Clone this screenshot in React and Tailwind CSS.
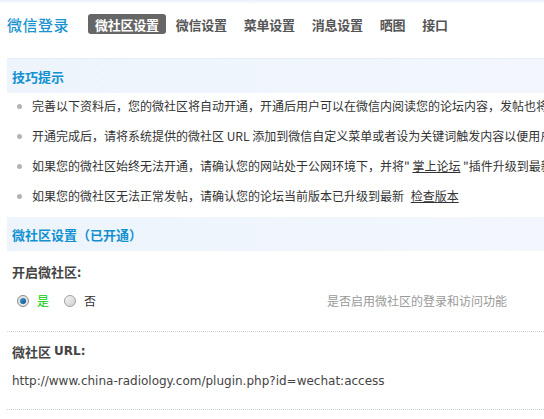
import React from "react"

const tabs = ["微社区设置", "微信设置", "菜单设置", "消息设置", "晒图", "接口"]

function SectionTitle({ children }) {
    return (
        <div className="h-[34px] flex items-center pl-[5px] bg-gradient-to-r from-[#edf4fc] to-[#f3f7fd] text-[13px] font-bold text-[#1191d0] leading-none">
            {children}
        </div>
    )
}

function Radio({ checked }) {
    if (checked) {
        return (
            <span className="block w-[12px] h-[12px] rounded-full border border-[#8e8e8e] bg-[#e4e4e4] flex items-center justify-center">
                <span className="block w-[6px] h-[6px] rounded-full bg-gradient-to-br from-[#3fa2dc] to-[#0a4f86]" />
            </span>
        )
    }
    return <span className="block w-[12px] h-[12px] rounded-full border border-[#a0a0a0] bg-gradient-to-br from-[#f6f6f6] to-[#cfcfcf]" />
}

function Tip({ children }) {
    return (
        <li className="h-[30px] flex items-center whitespace-nowrap">
            <span className="ml-[10px] w-[5px] h-[5px] rounded-full bg-[#b4b4b4] shrink-0" />
            <span className="ml-[10px] text-[12px] text-[#333] leading-none">{children}</span>
        </li>
    )
}

export default function App() {
    return (
        <div className="w-[544px] h-[419px] overflow-hidden bg-white font-['Noto_Sans_CJK_SC','Noto_Sans',sans-serif]">
            <div className="h-[4px] bg-gradient-to-b from-[#e9f0f9] to-white" />
            <div className="pl-[7px]">
                <div className="h-[55px] pt-[10px] border-b border-[#e4edf8]">
                    <div className="flex items-center h-[20px]">
                        <h1 className="text-[15px] leading-none text-[#1a93cf] font-medium tracking-[0.5px]">微信登录</h1>
                        <ul className="flex items-center ml-[19px]">
                            {tabs.map((t, i) => (
                                <li
                                    key={t}
                                    className={
                                        i === 0
                                            ? "h-[20px] px-[7px] flex items-center rounded-[3px] bg-[#666] text-white text-[13px] font-bold leading-none tracking-[-0.25px]"
                                            : "h-[20px] px-[7px] ml-[3px] flex items-center text-[#555] text-[13px] font-bold leading-none tracking-[-0.25px]"
                                    }
                                >
                                    {t}
                                </li>
                            ))}
                        </ul>
                    </div>
                </div>

                <SectionTitle>技巧提示</SectionTitle>
                <ul className="-mt-[2px] mb-[6px]">
                    <Tip>完善以下资料后，您的微社区将自动开通，开通后用户可以在微信内阅读您的论坛内容，发帖也将同步到论坛</Tip>
                    <Tip>开通完成后，请将系统提供的微社区 URL 添加到微信自定义菜单或者设为关键词触发内容以便用户访问</Tip>
                    <Tip>
                        如果您的微社区始终无法开通，请确认您的网站处于公网环境下，并将" <a className="underline">掌上论坛</a> "插件升级到最新版本
                    </Tip>
                    <Tip>
                        如果您的微社区无法正常发帖，请确认您的论坛当前版本已升级到最新 <a className="underline ml-[4px]">检查版本</a>
                    </Tip>
                </ul>

                <SectionTitle>微社区设置（已开通）</SectionTitle>

                <div className="pt-[5px] pb-[15px] border-b border-dotted border-[#c9d3dd]">
                    <div className="h-[30px] flex items-center pl-[5px] text-[13px] font-bold text-[#444] leading-none">开启微社区:</div>
                    <div className="h-[30px] flex items-center pl-[5px]">
                        <div className="w-[315px] flex items-center text-[12px] leading-none">
                            <span className="ml-[5px]"><Radio checked /></span>
                            <span className="ml-[8px] text-[#00cc00]">是</span>
                            <span className="ml-[15px]"><Radio /></span>
                            <span className="ml-[8px] text-[#333]">否</span>
                        </div>
                        <span className="text-[12px] text-[#999] leading-none">是否启用微社区的登录和访问功能</span>
                    </div>
                </div>

                <div className="pt-[4px] pb-[13px] border-b border-dotted border-[#c9d3dd]">
                    <div className="h-[30px] flex items-center pl-[5px] text-[13px] font-bold text-[#444] leading-none">
                        微社区 <span className="ml-[3px] font-['DejaVu_Sans',sans-serif] text-[12px]">URL:</span>
                    </div>
                    <div className="h-[30px] flex items-center pl-[5px] text-[12px] text-[#444] leading-none font-['DejaVu_Sans',sans-serif]">
                        http://www.china-radiology.com/plugin.php?id=wechat:access
                    </div>
                </div>
            </div>
        </div>
    )
}
